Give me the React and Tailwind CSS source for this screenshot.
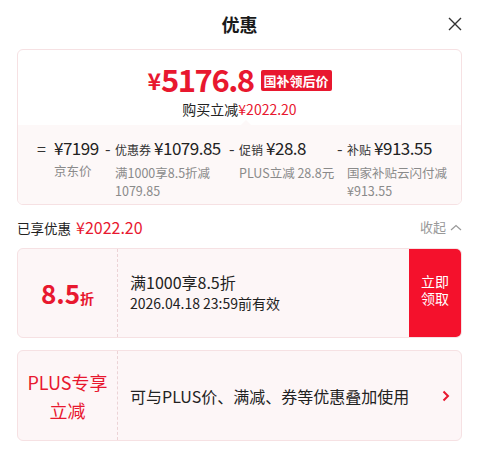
import React from 'react';

const RED = 'text-[#e8182f]';

// Breakdown column: dash + label/amount on top, gray note below
const Part = ({ dash, label, amount, note, width }) => (
  <div className={`flex ${width}`}>
    <span className="w-[10px] shrink-0 text-[16px] leading-[22px] text-[#333]">{dash}</span>
    <div className="flex flex-col">
      <div className="flex items-baseline whitespace-nowrap leading-[22px]">
        {label && <span className="text-[12px] text-[#333] mr-[3px]">{label}</span>}
        <span className="text-[17px] text-[#222] tracking-[-0.5px]">{amount}</span>
      </div>
      <div className="mt-[3px] text-[12.5px] leading-[18px] text-[#8a8a8a] whitespace-nowrap">{note}</div>
    </div>
  </div>
);

const App = () => {
  return (
    <div
      className="w-[479px] h-[455px] bg-white overflow-hidden"
      style={{ fontFamily: '"Noto Sans CJK SC", "Noto Sans", sans-serif' }}
    >
      <div className="relative h-[48px] flex items-center justify-center">
        <h1 className="text-[18px] font-bold text-[#1a1a1a]">优惠</h1>
        <svg className="absolute right-[17px] top-[17px]" width="14" height="14" viewBox="0 0 14 14">
          <path d="M1 1 L13 13 M13 1 L1 13" stroke="#333" strokeWidth="1.4" fill="none" />
        </svg>
      </div>

      <div className="mx-[17px] mt-[1px] border border-[#f6e1e3] rounded-[6px] overflow-hidden">
        <div className="flex flex-col items-center pt-[10px] pb-[6px]">
          <div className="flex items-center h-[36px]">
            <span className={`${RED} font-bold text-[23px] mt-[5px]`}>¥</span>
            <span className={`${RED} font-bold text-[31px] tracking-[-1.5px] leading-none`}>5176.8</span>
            <span className="ml-[7px] mt-[4px] bg-[#e8182f] text-white font-bold text-[13px] leading-[21px] px-[3px] rounded-[2px]">
              国补领后价
            </span>
          </div>
          <div className="mt-[3px] text-[14px] leading-[20px] text-[#222]">
            购买立减<span className={RED}>¥2022.20</span>
          </div>
        </div>

        <div className="relative bg-[#fdf8f8] pl-[19px] pt-[12px] pb-[4px]">
          <div className="absolute left-[223px] -top-[5px] w-0 h-0 border-l-[5px] border-r-[5px] border-b-[5px] border-l-transparent border-r-transparent border-b-[#fdf8f8]" />
          <div className="flex">
            <span className="w-[17px] text-[16px] leading-[22px] text-[#333]">=</span>
            <div className="w-[51px] flex flex-col">
              <span className="text-[17px] leading-[22px] text-[#222] tracking-[-0.5px]">¥7199</span>
              <span className="mt-[3px] text-[12.5px] leading-[18px] text-[#8a8a8a]">京东价</span>
            </div>
            <Part width="w-[124px]" dash="-" label="优惠券" amount="¥1079.85" note={<>满1000享8.5折减<br />1079.85</>} />
            <Part width="w-[108px]" dash="-" label="促销" amount="¥28.8" note="PLUS立减 28.8元" />
            <Part width="flex-1" dash="-" label="补贴" amount="¥913.55" note={<>国家补贴云闪付减<br />¥913.55</>} />
          </div>
        </div>
      </div>

      <div className="mx-[17px] mt-[11px] flex items-center justify-between h-[22px]">
        <div className="flex items-baseline">
          <span className="text-[13.5px] text-[#222]">已享优惠</span>
          <span className={`${RED} text-[16px] ml-[5px]`}>¥2022.20</span>
        </div>
        <div className="flex items-center text-[13px] text-[#999]">
          收起
          <svg className="ml-[4px]" width="12" height="7" viewBox="0 0 12 7">
            <path d="M1 6 L6 1.5 L11 6" stroke="#999" strokeWidth="1.2" fill="none" />
          </svg>
        </div>
      </div>

      <div className="mx-[17px] mt-[10px] h-[90px] flex border border-[#f6e1e3] rounded-[6px] bg-[#fdf6f7] overflow-hidden">
        <div className="w-[100px] shrink-0 flex items-center justify-center border-r border-dashed border-[#ecd3d6]">
          <div className="flex items-baseline">
            <span className={`${RED} font-bold text-[26px] leading-[30px]`}>8.5</span>
            <span className={`${RED} font-bold text-[14px]`}>折</span>
          </div>
        </div>
        <div className="flex-1 flex flex-col justify-center pl-[12px] pb-[2px]">
          <span className="text-[16px] leading-[22px] text-[#222]">满1000享8.5折</span>
          <span className="text-[14px] leading-[20px] text-[#222]">2026.04.18 23:59前有效</span>
        </div>
        <div className="w-[52px] shrink-0 bg-[#f4112c] flex flex-col items-center justify-center text-white text-[14px] leading-[20px] pb-[8px]">
          <span className="-mb-[3px]">立即</span>
          <span>领取</span>
        </div>
      </div>

      <div className="mx-[17px] mt-[12px] h-[91px] flex border border-[#f6e1e3] rounded-[6px] bg-[#fdf6f7] overflow-hidden">
        <div className="w-[100px] shrink-0 flex flex-col items-center justify-center border-r border-dashed border-[#ecd3d6]">
          <span className={`${RED} text-[18px] leading-[28px] whitespace-nowrap`}>PLUS专享</span>
          <span className={`${RED} text-[18px] leading-[28px]`}>立减</span>
        </div>
        <div className="flex-1 flex items-center pl-[12px] text-[16px] text-[#222]">
          可与PLUS价、满减、券等优惠叠加使用
        </div>
        <div className="w-[30px] flex items-center justify-center">
          <svg width="8" height="12" viewBox="0 0 8 12">
            <path d="M1.5 1.5 L6 6 L1.5 10.5" stroke="#e8182f" strokeWidth="2" fill="none" />
          </svg>
        </div>
      </div>
    </div>
  );
};

export default App;
